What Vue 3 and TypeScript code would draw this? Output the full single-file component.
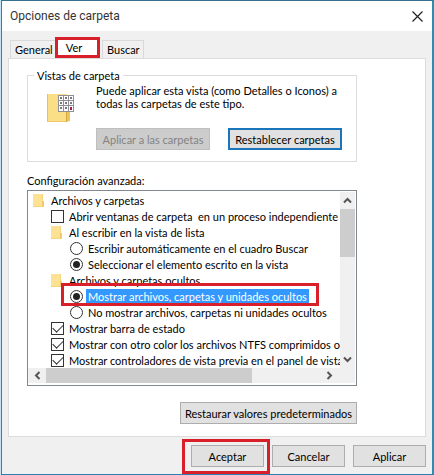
<script setup lang="ts">
import { ref } from 'vue'

type Kind = 'folder' | 'check' | 'radio'

interface Row {
  kind: Kind
  level: number
  text: string
  group?: string
  value?: string
  marked?: boolean
}

const tabs = ['General', 'Ver', 'Buscar']
const activeTab = ref('Ver')

const rows: Row[] = [
  { kind: 'folder', level: 0, text: 'Archivos y carpetas' },
  { kind: 'check', level: 1, value: 'process', text: 'Abrir ventanas de carpeta  en un proceso independiente' },
  { kind: 'folder', level: 1, text: 'Al escribir en la vista de lista' },
  { kind: 'radio', level: 2, group: 'typing', value: 'search', text: 'Escribir automáticamente en el cuadro Buscar' },
  { kind: 'radio', level: 2, group: 'typing', value: 'select', text: 'Seleccionar el elemento escrito en la vista' },
  { kind: 'folder', level: 1, text: 'Archivos y carpetas ocultos' },
  { kind: 'radio', level: 2, group: 'hidden', value: 'show', marked: true, text: 'Mostrar archivos, carpetas y unidades ocultos' },
  { kind: 'radio', level: 2, group: 'hidden', value: 'hide', text: 'No mostrar archivos, carpetas ni unidades ocultos' },
  { kind: 'check', level: 1, value: 'status', text: 'Mostrar barra de estado' },
  { kind: 'check', level: 1, value: 'ntfs', text: 'Mostrar con otro color los archivos NTFS comprimidos o c' },
  { kind: 'check', level: 1, value: 'preview', text: 'Mostrar controladores de vista previa en el panel de vista' },
]

const checked = ref<string[]>(['status', 'ntfs', 'preview'])
const choices = ref<Record<string, string>>({ typing: 'select', hidden: 'show' })
</script>

<template>
  <main class="dialog">
    <header class="titlebar">
      <h1>Opciones de carpeta</h1>
      <button class="close" type="button" aria-label="Cerrar">
        <svg width="11" height="11" viewBox="0 0 11 11"><path d="M0.5 0.5 10.5 10.5M10.5 0.5 0.5 10.5" /></svg>
      </button>
    </header>

    <div class="body">
      <nav class="tabs" role="tablist">
        <button
          v-for="tab in tabs"
          :key="tab"
          type="button"
          role="tab"
          class="tab"
          :class="{ active: tab === activeTab }"
          :aria-selected="tab === activeTab"
          @click="activeTab = tab"
        >{{ tab }}</button>
      </nav>

      <section class="panel">
        <fieldset class="views">
          <legend>Vistas de carpeta</legend>
          <svg class="folder-big" width="28" height="30" viewBox="0 0 28 30">
            <path d="M0 1h20v28H0z" fill="#fbdf86" />
            <path d="M0.5 1v28" stroke="#e3c15e" />
            <path d="M0 28.5h19" stroke="#ecc866" />
            <path d="M19 17h4v11l-4 1z" fill="#efc35a" />
            <path d="M19.5 17v12" stroke="#d5a93d" />
            <path d="M11 2h16v17H11z" fill="#8f8f97" />
            <g fill="#fff">
              <path d="M12 3h4v4h-4zM17 3h4v4h-4zM22 3h4v4h-4z" />
              <path d="M12 8h4v4h-4zM17 8h4v4h-4zM22 8h4v4h-4z" />
              <path d="M12 13h4v5h-4zM17 13h4v5h-4zM22 13h4v5h-4z" />
            </g>
            <path d="M13 4h2v2h-2zM18 4h2v2h-2zM23 4h2v2h-2zM13 9h2v2h-2zM18 9h2v2h-2zM23 9h2v2h-2zM13 14h2v2h-2zM18 14h2v2h-2z" fill="#777780" />
            <path d="M23 14h2v3h-2z" fill="#a32045" />
          </svg>
          <div class="views-main">
            <p>Puede aplicar esta vista (como Detalles o Iconos) a<br />todas las carpetas de este tipo.</p>
            <div class="views-actions">
              <button class="btn" type="button" disabled>Aplicar a las carpetas</button>
              <button class="btn focused" type="button">Restablecer carpetas</button>
            </div>
          </div>
        </fieldset>

        <h2>Configuración avanzada:</h2>
        <div class="tree">
          <div class="rows">
            <component
              :is="row.kind === 'folder' ? 'div' : 'label'"
              v-for="row in rows"
              :key="row.text"
              class="row"
              :class="['level-' + row.level, { marked: row.marked }]"
            >
              <svg v-if="row.kind === 'folder'" class="folder" width="12" height="13" viewBox="0 0 12 13">
                <path d="M0 0h9v12H0z" fill="#fde294" />
                <path d="M9 7h2v5l-2 1z" fill="#f1cb68" />
                <path d="M0 12h11v1H0z" fill="#f3d57d" />
                <path d="M9 0h1v7H9z" fill="#f6d67c" />
              </svg>
              <input v-else-if="row.kind === 'check'" v-model="checked" type="checkbox" :value="row.value" />
              <input v-else v-model="choices[row.group!]" type="radio" :name="row.group" :value="row.value" />
              <span class="text">{{ row.text }}</span>
            </component>
          </div>
          <div class="vbar">
            <svg width="9" height="7" viewBox="0 0 9 7"><path d="M1 5.5 4.5 2 8 5.5" /></svg>
            <div class="vthumb"></div>
            <svg width="9" height="7" viewBox="0 0 9 7"><path d="M1 1.5 4.5 5 8 1.5" /></svg>
          </div>
          <div class="hbar">
            <svg width="7" height="9" viewBox="0 0 7 9"><path d="M5.5 1 2 4.5 5.5 8" /></svg>
            <div class="htrack"><div class="hthumb"></div></div>
            <svg width="7" height="9" viewBox="0 0 7 9"><path d="M1.5 1 5 4.5 1.5 8" /></svg>
          </div>
        </div>
        <div class="restore">
          <button class="btn" type="button">Restaurar valores predeterminados</button>
        </div>
      </section>

      <footer class="actions">
        <button class="btn highlighted" type="button">Aceptar</button>
        <button class="btn" type="button">Cancelar</button>
        <button class="btn" type="button">Aplicar</button>
      </footer>
    </div>
  </main>
</template>

<style>
body {
  margin: 0;
  background: #c5e4f5;
}
</style>

<style scoped>
* {
  box-sizing: border-box;
}

.dialog {
  display: flex;
  flex-direction: column;
  min-height: 100vh;
  margin-left: 1px;
  border: 1px solid #2f7fb5;
  border-top-color: #35708f;
  border-right: 2px solid #2c8fb0;
  background: #f0f0f0;
  color: #000;
  font: 11px/13px Lato, "Liberation Sans", sans-serif;
}

button,
input {
  margin: 0;
  font: inherit;
  color: inherit;
}

.titlebar {
  display: flex;
  align-items: center;
  justify-content: space-between;
  height: 30px;
  padding: 0 9px 0 8px;
  background: #fff;
}

h1 {
  margin: 0;
  color: #333;
  font: 12px/16px Roboto, "Noto Sans", sans-serif;
}

.close {
  display: flex;
  padding: 0;
  border: 0;
  background: none;
}

.close svg {
  fill: none;
  stroke: #222;
  stroke-width: 1.2;
}

.body {
  display: flex;
  flex: 1;
  flex-direction: column;
  padding: 6px 6px 7px;
}

.tabs {
  display: flex;
  align-items: flex-end;
  height: 21px;
  padding-left: 2px;
}

.tab {
  height: 18px;
  padding: 0 4px;
  border: 1px solid #d9d9d9;
  border-bottom: 0;
  background: #f0f0f0;
  white-space: nowrap;
}

.tab:first-child {
  width: 45px;
  border-right: 0;
}

.tab:last-child {
  width: 42px;
  margin-left: 2px;
}

.tab.active {
  width: 45px;
  height: 21px;
  padding: 0 7px 0 0;
  border: 3px solid #d81f2a;
  background: #fff;
}

.panel {
  flex: 1;
  padding: 10px 68px 12px 18px;
  border: 1px solid #dcdcdc;
  background: #fff;
}

.views {
  display: flex;
  gap: 21px;
  min-width: 0;
  margin: 0;
  padding: 2px 14px 11px 19px;
  border: 1px solid #dcdcdc;
}

legend {
  margin-left: -13px;
  padding: 0 3px;
}

.folder-big {
  flex: none;
  margin-top: 9px;
}

.views-main {
  flex: 1;
  min-width: 0;
}

p {
  margin: 0;
  white-space: nowrap;
}

.views-actions {
  display: flex;
  justify-content: space-between;
  margin-top: 18px;
}

.btn {
  height: 22px;
  padding: 0;
  border: 1px solid #adadad;
  background: #e1e1e1;
  white-space: nowrap;
}

.views-actions .btn {
  width: 114px;
}

.btn:disabled {
  border-color: #bfbfbf;
  background: #ccc;
  color: #838383;
}

.btn.focused {
  border: 2px solid #1b75bb;
}

h2 {
  margin: 12px 0 3px;
  font: inherit;
}

.tree {
  display: grid;
  grid-template-columns: minmax(0, 1fr) 15px;
  padding: 1px 1px 2px 0;
  border: 1px solid #828790;
}

.rows {
  overflow: hidden;
}

.row {
  position: relative;
  display: flex;
  align-items: center;
  gap: 5px;
  height: 16px;
  white-space: pre;
}

.level-0 {
  padding-left: 5px;
}

.level-1 {
  padding-left: 23px;
}

.level-2 {
  padding-left: 42px;
}

.folder {
  flex: none;
  margin-right: 1px;
}

.row input {
  display: grid;
  flex: none;
  place-items: center;
  width: 13px;
  height: 13px;
  appearance: none;
  border: 1px solid #333;
  background: #fff;
}

.row input[type="radio"] {
  border-radius: 50%;
}

.row input[type="radio"]:checked::before {
  content: "";
  width: 7px;
  height: 7px;
  border-radius: 50%;
  background: #222;
}

.row input[type="checkbox"]:checked::before {
  content: "";
  width: 9px;
  height: 5px;
  margin-bottom: 3px;
  border: solid #333;
  border-width: 0 0 1px 1px;
  transform: rotate(-45deg);
}

.marked {
  z-index: 1;
}

.marked .text {
  margin-left: -2px;
  padding: 1px 2px;
  background: #3399ff;
  color: #fff;
}

.marked::after {
  position: absolute;
  inset: -5px 21px -2px 33px;
  border: 3px solid #d81f2a;
  content: "";
}

.vbar,
.hbar {
  display: flex;
  align-items: center;
  background: #f0f0f0;
}

.vbar {
  flex-direction: column;
  justify-content: space-between;
  padding: 5px 0;
}

.vthumb {
  width: 100%;
  height: 48px;
  margin: 5px 0 auto;
  background: #cdcdcd;
}

.hbar {
  grid-column: 1 / -1;
  height: 15px;
  padding: 0 22px 0 6px;
}

.htrack {
  flex: 1;
  height: 100%;
  margin: 0 5px;
}

.hthumb {
  width: 75%;
  height: 100%;
  background: #cdcdcd;
}

.vbar svg,
.hbar svg {
  flex: none;
  fill: none;
  stroke: #555;
  stroke-width: 2;
}

.restore {
  display: flex;
  justify-content: flex-end;
  margin-top: 16px;
}

.restore .btn {
  width: 177px;
}

.actions {
  display: flex;
  justify-content: flex-end;
  gap: 8px;
  margin-top: 8px;
}

.actions .btn {
  position: relative;
  width: 73px;
}

.highlighted::after {
  position: absolute;
  inset: -7px -7px -8px -10px;
  border: 3px solid #d81f2a;
  content: "";
}
</style>
